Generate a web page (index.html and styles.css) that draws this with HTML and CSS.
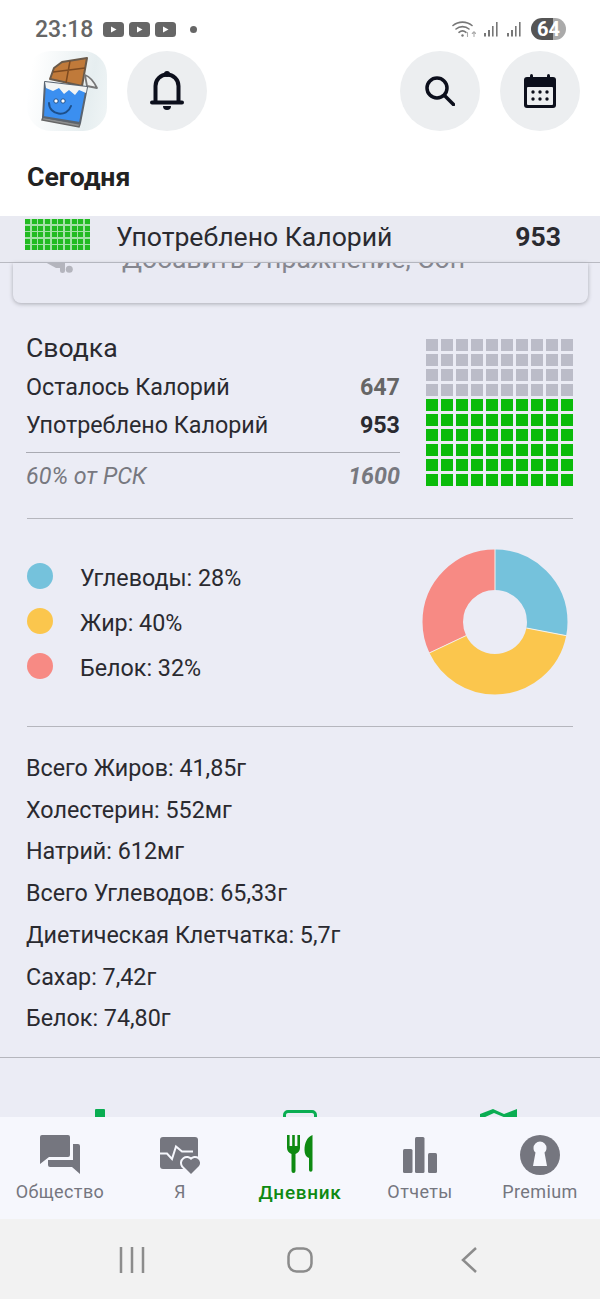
FILE: index.html
```html
<!DOCTYPE html>
<html lang="ru">
<head>
  <meta charset="UTF-8">
  <meta name="viewport" content="width=device-width, initial-scale=1.0">
  <title>Дневник</title>
  <link rel="stylesheet" href="styles.css">
</head>
<body>
  <header class="top">
    <div class="status">
      <span class="time">23:18</span>
      <span class="yt"><svg viewBox="0 0 21 15"><rect width="21" height="15" rx="3.5" fill="#666"/><path d="M8 4.5l5.500 3-5.500 3z" fill="#fff"/></svg></span>
      <span class="yt"><svg viewBox="0 0 21 15"><rect width="21" height="15" rx="3.5" fill="#666"/><path d="M8 4.5l5.500 3-5.500 3z" fill="#fff"/></svg></span>
      <span class="yt"><svg viewBox="0 0 21 15"><rect width="21" height="15" rx="3.5" fill="#666"/><path d="M8 4.5l5.500 3-5.500 3z" fill="#fff"/></svg></span>
      <span class="dot"></span>
      <span class="status-right">
        <svg class="wifi" width="24" height="18" viewBox="0 0 24 18" fill="none" stroke="#777" stroke-width="1.6" stroke-linecap="round">
          <path d="M1 5.5a15 15 0 0 1 19 0"/><path d="M4 9a10 10 0 0 1 13 0"/><path d="M7 12.3a5.5 5.5 0 0 1 7 0"/>
          <circle cx="10.5" cy="15.5" r="1.2" fill="#777" stroke="none"/>
          <path d="M15.5 12.5v4M22 12v4.5M20.3 13.5l1.7-1.7 1.7 1.7" stroke="#aaa" stroke-width="1.1"/>
        </svg>
        <svg class="signal" width="15" height="15" viewBox="0 0 15 15" fill="#777"><rect x="0" y="11" width="2" height="3.5"/><rect x="4" y="8" width="2" height="6.5"/><rect x="8" y="4" width="1.6" height="10.5"/><rect x="12" y="0" width="1.6" height="14.5"/></svg>
        <svg class="signal" width="15" height="15" viewBox="0 0 15 15" fill="#777"><rect x="0" y="11" width="2" height="3.5"/><rect x="4" y="8" width="2" height="6.5"/><rect x="8" y="4" width="1.6" height="10.5"/><rect x="12" y="0" width="1.6" height="14.5"/></svg>
        <span class="battery">64</span>
      </span>
    </div>

    <div class="actions">
      <div class="avatar">
        <svg width="80" height="80" viewBox="0 0 80 80">
          <path d="M23 28l4-11 8-6 25-4-5 28z" fill="#c07a3a" stroke="#6a5a4a" stroke-width="2" stroke-linejoin="round"/>
          <path d="M43 10l-4 22M26 21l32-4" stroke="#7d4a20" stroke-width="1.5" fill="none"/>
          <path d="M58 24c6 2 9 7 12 13l-10-2z" fill="#eef0f0" stroke="#777" stroke-width="1.8" stroke-linejoin="round"/>
          <path d="M16 66l37 7-1 3-37-7z" fill="#8d8f90" stroke="#666" stroke-width="1.5"/>
          <path d="M18 31l42 5-7 36-37-6z" fill="#3b8ff0" stroke="#5a6470" stroke-width="2" stroke-linejoin="round"/>
          <path d="M18 31l42 5-1 6-7-3-4 5-6-5-5 4-5-6-6 3-7-3z" fill="#f2f4f4"/>
          <circle cx="29" cy="50" r="2.2" fill="#fff" stroke="#1d4f8a"/>
          <circle cx="36" cy="50" r="2.2" fill="#fff" stroke="#1d4f8a"/>
          <path d="M22 52c0 12 18 15 22 3" fill="none" stroke="#1d4f8a" stroke-width="2" stroke-linecap="round"/>
        </svg>
      </div>
      <button class="round">
        <svg width="34" height="40" viewBox="0 0 34 40" fill="none" stroke="#0c0f1c" stroke-width="4" stroke-linecap="round">
          <path d="M5.500 31V15a11.500 11.500 0 0 1 23 0v16"/><path d="M2 31.500h30"/>
          <circle cx="17" cy="3" r="3" fill="#0c0f1c" stroke="none"/>
          <path d="M13 35h8a4 4 0 0 1-8 0z" fill="#0c0f1c" stroke="none"/>
        </svg>
      </button>
      <span class="grow"></span>
      <button class="round">
        <svg width="30" height="30" viewBox="0 0 30 30" fill="none" stroke="#0c0f1c" stroke-width="3.500" stroke-linecap="round">
          <circle cx="12" cy="12" r="10"/><path d="M19.500 19.500L28.500 28.500"/>
        </svg>
      </button>
      <button class="round">
        <svg width="32" height="34" viewBox="0 0 32 34">
          <path d="M3 3h26a3 3 0 0 1 3 3v25a3 3 0 0 1-3 3H3a3 3 0 0 1-3-3V6a3 3 0 0 1 3-3z" fill="#0c0f1c"/>
          <rect x="6" y="0" width="3" height="6" rx="1.5" fill="#0c0f1c"/><rect x="23" y="0" width="3" height="6" rx="1.5" fill="#0c0f1c"/>
          <rect x="3" y="13" width="26" height="18" rx="1" fill="#eceef0"/>
          <g fill="#0c0f1c"><circle cx="9" cy="18" r="1.7"/><circle cx="16" cy="18" r="1.7"/><circle cx="23" cy="18" r="1.7"/><circle cx="9" cy="25" r="1.7"/><circle cx="16" cy="25" r="1.7"/><circle cx="23" cy="25" r="1.7"/></g>
        </svg>
      </button>
    </div>

    <h1 class="title">Сегодня</h1>
  </header>

  <main class="content">
    <div class="sticky-row">
      <div class="mini-waffle">
        <i></i><i></i><i></i><i></i><i></i><i></i><i></i><i></i><i></i><i></i>
        <i></i><i></i><i></i><i></i><i></i><i></i><i></i><i></i><i></i><i></i>
        <i></i><i></i><i></i><i></i><i></i><i></i><i></i><i></i><i></i><i></i>
        <i></i><i></i><i></i><i></i><i></i><i></i><i></i><i></i><i></i><i></i>
        <i></i><i></i><i></i><i></i><i></i><i></i><i></i><i></i><i></i><i></i>
      </div>
      <span class="sticky-label">Употреблено Калорий</span>
      <b class="sticky-value">953</b>
    </div>

    <div class="card">
      <div class="card-row">
        <svg width="32" height="40" viewBox="0 0 32 40" fill="#b4b5bd"><path d="M2 24h16v6h-5z"/><rect x="17" y="22" width="5" height="13" rx="2.5"/><circle cx="26.300" cy="31.300" r="3.500"/></svg>
        <span class="card-label">Добавить Упражнение, Сон</span>
      </div>
    </div>

    <section class="summary">
      <div class="summary-text">
        <h2 class="summary-title">Сводка</h2>
        <div class="line"><span>Осталось Калорий</span><b class="muted">647</b></div>
        <div class="line"><span>Употреблено Калорий</span><b>953</b></div>
        <div class="line line-rsk"><span>60% от РСК</span><b>1600</b></div>
      </div>
      <div class="waffle">
        <i class="off"></i><i class="off"></i><i class="off"></i><i class="off"></i><i class="off"></i><i class="off"></i><i class="off"></i><i class="off"></i><i class="off"></i><i class="off"></i>
        <i class="off"></i><i class="off"></i><i class="off"></i><i class="off"></i><i class="off"></i><i class="off"></i><i class="off"></i><i class="off"></i><i class="off"></i><i class="off"></i>
        <i class="off"></i><i class="off"></i><i class="off"></i><i class="off"></i><i class="off"></i><i class="off"></i><i class="off"></i><i class="off"></i><i class="off"></i><i class="off"></i>
        <i class="off"></i><i class="off"></i><i class="off"></i><i class="off"></i><i class="off"></i><i class="off"></i><i class="off"></i><i class="off"></i><i class="off"></i><i class="off"></i>
        <i></i><i></i><i></i><i></i><i></i><i></i><i></i><i></i><i></i><i></i>
        <i></i><i></i><i></i><i></i><i></i><i></i><i></i><i></i><i></i><i></i>
        <i></i><i></i><i></i><i></i><i></i><i></i><i></i><i></i><i></i><i></i>
        <i></i><i></i><i></i><i></i><i></i><i></i><i></i><i></i><i></i><i></i>
        <i></i><i></i><i></i><i></i><i></i><i></i><i></i><i></i><i></i><i></i>
        <i></i><i></i><i></i><i></i><i></i><i></i><i></i><i></i><i></i><i></i>
      </div>
    </section>

    <section class="macros">
      <ul class="legend">
        <li><span class="swatch carbs"></span>Углеводы: 28%</li>
        <li><span class="swatch fat"></span>Жир: 40%</li>
        <li><span class="swatch protein"></span>Белок: 32%</li>
      </ul>
      <svg class="donut" width="146" height="146" viewBox="-73 -73 146 146">
        <g fill="none" stroke-width="40.5" transform="rotate(-90)">
          <circle r="52.25" pathLength="100" stroke="#75c2dc" stroke-dasharray="28 72"/>
          <circle r="52.25" pathLength="100" stroke="#fbc64d" stroke-dasharray="40 60" stroke-dashoffset="-28"/>
          <circle r="52.25" pathLength="100" stroke="#f78a84" stroke-dasharray="32 68" stroke-dashoffset="-68"/>
        </g>
        <g stroke="#f4f2ee" stroke-width="1">
          <line y1="-32" y2="-73"/>
          <line y1="-32" y2="-73" transform="rotate(100.8)"/>
          <line y1="-32" y2="-73" transform="rotate(244.8)"/>
        </g>
      </svg>
    </section>

    <ul class="nutrients">
      <li>Всего Жиров: 41,85г</li>
      <li>Холестерин: 552мг</li>
      <li>Натрий: 612мг</li>
      <li>Всего Углеводов: 65,33г</li>
      <li>Диетическая Клетчатка: 5,7г</li>
      <li>Сахар: 7,42г</li>
      <li>Белок: 74,80г</li>
    </ul>

    <div class="peek">
      <svg width="12" height="9" viewBox="0 0 12 9"><path d="M2 0h8a1 1 0 0 1 1 1v8H1V1a1 1 0 0 1 1-1z" fill="#0aad52"/></svg>
      <svg width="34" height="8" viewBox="0 0 34 8" fill="none"><path d="M1.5 8V5a3.5 3.5 0 0 1 3.5-3.500h24a3.500 3.500 0 0 1 3.500 3.500v3" stroke="#0aad52" stroke-width="3"/></svg>
      <svg class="peek-map" width="37" height="9" viewBox="0 0 37 9"><path d="M0 5l13-5 11 5 13-5v9H26L14 4 3 9H0z" fill="#0aad52"/></svg>
    </div>
  </main>

  <nav class="tabs">
    <a class="tab">
      <svg width="40" height="40" viewBox="0 0 40 40" fill="#75767f"><path d="M2 0h26a2 2 0 0 1 2 2v18a2 2 0 0 1-2 2H9l-9 7V2a2 2 0 0 1 2-2z"/><path d="M33 9h5a2 2 0 0 1 2 2v28l-8-7H10a2 2 0 0 1-2-2v-5h25z"/></svg>
      <span>Общество</span>
    </a>
    <a class="tab">
      <svg width="40" height="40" viewBox="0 0 40 40"><rect y="2" width="38" height="32" rx="3" fill="#75767f"/><path d="M0 18.500h7l5 5.500 4-12.500 6 5h11" fill="none" stroke="#f6f7fd" stroke-width="2"/><path d="M31 39l-8-8a5 5 0 0 1 8-6 5 5 0 0 1 8 6z" fill="#75767f" stroke="#f6f7fd" stroke-width="4" paint-order="stroke"/></svg>
      <span>Я</span>
    </a>
    <a class="tab tab-active">
      <svg width="40" height="40" viewBox="0 -2 40 40" fill="#0e8a12"><path d="M7-2h2.600v11h2.600V-2h2.600v11h2.600V-2H20v13c0 3-2 5-4.500 6v17a2 2 0 0 1-4 0V17C9 16 7 14 7 11z"/><path d="M32.500-2V33a1.750 1.750 0 0 1-3.500 0V21c-3-1-4.500-4-4.500-8 0-7 2.500-13 8-15z"/></svg>
      <span>Дневник</span>
    </a>
    <a class="tab">
      <svg width="40" height="40" viewBox="0 0 40 40" fill="#75767f"><rect x="3" y="14" width="9.500" height="24" rx="1.500"/><rect x="15" y="2" width="9.500" height="36" rx="1.500"/><rect x="28" y="18" width="9" height="20" rx="1.500"/></svg>
      <span>Отчеты</span>
    </a>
    <a class="tab">
      <svg width="40" height="40" viewBox="0 0 40 40"><circle cx="20" cy="20" r="20" fill="#75767f"/><path d="M13.500 13a6.500 6.500 0 0 1 13 0c0 2-.8 3.500-2 4.500l2.500 13.500H13l2.500-13.500c-1.200-1-2-2.500-2-4.500z" fill="#f6f7fd"/></svg>
      <span>Premium</span>
    </a>
  </nav>

  <footer class="sysnav">
    <svg width="26" height="26" viewBox="0 0 26 26" stroke="#8c8c8c" stroke-width="2.500"><path d="M2 0v26M13 0v26M24 0v26"/></svg>
    <svg class="sys-home" width="26" height="26" viewBox="0 0 26 26" fill="none" stroke="#8c8c8c" stroke-width="2.500"><rect x="1.500" y="1.500" width="23" height="23" rx="8"/></svg>
    <svg width="16" height="26" viewBox="0 0 16 26" fill="none" stroke="#8c8c8c" stroke-width="2.500"><path d="M15 1L2 13l13 12"/></svg>
  </footer>
</body>
</html>
```

FILE: styles.css
```css
* {
  box-sizing: border-box;
}
body {
  margin: 0;
  width: 600px;
  height: 1299px;
  overflow: hidden;
  display: flex;
  flex-direction: column;
  font-family: Roboto, "Noto Sans", sans-serif;
  color: #2a2a30;
  background-color: #ebecf5;
}
ul {
  list-style: none;
  margin: 0;
  padding: 0;
}
svg {
  display: block;
  flex: none;
}

/* top */
.top {
  height: 216px;
  flex: none;
  background-color: #fff;
}
.status {
  height: 51px;
  padding: 7px 34px 0 35px;
  display: flex;
  align-items: center;
}
.time {
  font-size: 23px;
  font-weight: 500;
  color: #666;
  margin-right: 10px;
}
.yt {
  margin-right: 5px;
}
.yt svg {
  width: 21px;
  height: 15px;
}
.dot {
  width: 7px;
  height: 7px;
  margin-left: 9px;
  border-radius: 50%;
  background-color: #666;
}
.status-right {
  margin-left: auto;
  display: flex;
  align-items: center;
  gap: 8px;
}
.battery {
  width: 35px;
  height: 22px;
  margin-left: 1px;
  border-radius: 11px;
  background: linear-gradient(90deg, #555 0 64%, #aaa 64%);
  color: #fff;
  font-size: 20px;
  font-weight: 700;
  line-height: 22px;
  text-align: center;
}
.actions {
  display: flex;
  gap: 20px;
  padding: 0 20px 0 27px;
}
.grow {
  flex: 1;
}
.round {
  width: 80px;
  height: 80px;
  padding: 0;
  border: 0;
  border-radius: 50%;
  background-color: #eceef0;
  display: flex;
  align-items: center;
  justify-content: center;
}
.avatar {
  width: 80px;
  height: 80px;
  border-radius: 24px;
  background: linear-gradient(100deg, #fff 8%, #e6eef0 75%, #f0f5f6);
}
.title {
  margin: 30px 0 0 27px;
  font-size: 26.600px;
  font-weight: 700;
  color: #222;
}

/* scroll area */
.content {
  flex: 1;
  min-height: 0;
  overflow: hidden;
}
.sticky-row {
  height: 47px;
  padding: 3px 39px 0 25px;
  display: flex;
  align-items: flex-start;
  background-color: #e9eaf2;
  border-bottom: 1px solid #b9bac2;
}
.mini-waffle {
  width: 65px;
  display: grid;
  grid-template-columns: repeat(10, 5px);
  gap: 1.500px 1.670px;
  background-color: #a5e0a8;
}
.mini-waffle i {
  height: 5px;
  background-color: #22bb22;
}
.sticky-label {
  margin-left: 26px;
  font-size: 26.600px;
  line-height: 36px;
}
.sticky-value {
  margin-left: auto;
  font-size: 26.600px;
  line-height: 36px;
}
.card {
  height: 40px;
  margin: 0 12px 0 13px;
  overflow: hidden;
  border-radius: 0 0 8px 8px;
  background-color: #e9eaf3;
  box-shadow: 0 1px 4px #a9aab2;
}
.card-row {
  margin-top: -25px;
  padding-left: 30px;
  display: flex;
  align-items: center;
  gap: 47px;
}
.card-label {
  font-size: 26.600px;
  color: #85868e;
}

/* summary */
.summary {
  margin: 0 27px;
  padding: 36px 0 23px;
  display: flex;
  justify-content: space-between;
  border-bottom: 1px solid #b5b6bd;
}
.summary-text {
  width: 374px;
  margin-left: -1px;
}
.summary-title {
  margin: -9px 0 2px;
  font-size: 26.600px;
  font-weight: 400;
  line-height: 36px;
}
.line {
  display: flex;
  justify-content: space-between;
  font-size: 23.300px;
  line-height: 38px;
}
.muted {
  color: #666;
}
.line-rsk {
  margin-top: 8px;
  padding-top: 4px;
  border-top: 1px solid #a9aab2;
  font-style: italic;
  color: #77787f;
}
.waffle {
  width: 147px;
  display: grid;
  grid-template-columns: repeat(10, 12px);
  grid-auto-rows: 12px;
  gap: 3px;
}
.waffle i {
  background-color: #0abb0a;
}
.waffle i.off {
  background-color: #bbbcc8;
}

/* macros */
.macros {
  margin: 0 27px;
  padding: 30px 5px 31px 0;
  display: flex;
  justify-content: space-between;
  align-items: center;
  border-bottom: 1px solid #b5b6bd;
}
.legend {
  margin-top: -2px;
}
.legend li {
  height: 45px;
  padding-top: 4px;
  display: flex;
  align-items: center;
  gap: 27px;
  font-size: 23.300px;
}
.swatch {
  width: 26px;
  height: 26px;
  margin-bottom: 4px;
  border-radius: 50%;
}
.carbs {
  background-color: #75c2dc;
}
.fat {
  background-color: #fbc64d;
}
.protein {
  background-color: #f78a84;
}

/* nutrients */
.nutrients {
  padding: 21px 27px 17px 26px;
  border-bottom: 1px solid #b5b6bd;
}
.nutrients li {
  font-size: 23.300px;
  line-height: 41.700px;
}
.peek {
  height: 60px;
  display: grid;
  grid-template-columns: repeat(3, 200px);
  justify-items: center;
  align-items: end;
}
.peek-map {
  margin-left: -4px;
}

/* bottom nav */
.tabs {
  height: 102px;
  flex: none;
  display: flex;
  background-color: #f6f7fd;
}
.tab {
  flex: 1;
  padding-top: 18px;
  display: flex;
  flex-direction: column;
  align-items: center;
  gap: 6px;
  font-size: 18px;
  letter-spacing: .4px;
  color: #75767f;
}
.tab-active {
  font-size: 19px;
  font-weight: 500;
  letter-spacing: .7px;
  color: #0e8a12;
}
.sysnav {
  height: 80px;
  flex: none;
  padding: 2px 0 0 119px;
  display: flex;
  align-items: center;
  background-color: #f2f2f2;
}
.sys-home {
  margin: 0 148px 0 142px;
}
```
